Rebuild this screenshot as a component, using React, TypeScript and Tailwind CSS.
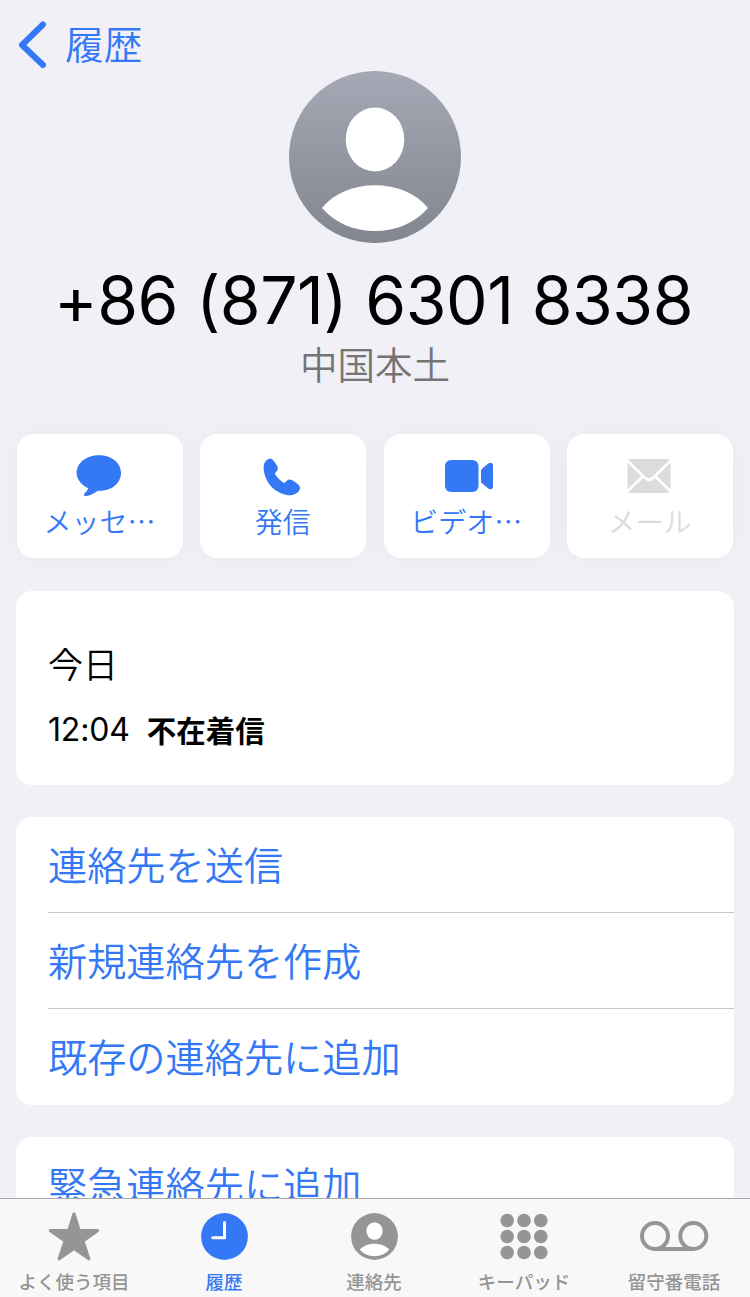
import type { ReactNode } from 'react';

const MessageIcon = () => (
  <svg className="mr-0.5" width="46" height="44" viewBox="0 0 46 44" fill="currentColor">
    <path d="M23 1.200C35.400 1.200 45 8.700 45 19S35.400 36.800 23.400 36.800c-1.200 0-2 .1-3.400 1.200-3 2.100-7.200 4-10.300 4-1.600 0-2.300-1.300-1.200-2.500 1.600-1.700 3-3.300 3.700-5.300C5.500 31 .6 25.600 .6 19 .6 8.700 10.500 1.200 23 1.200Z" />
  </svg>
);

const PhoneIcon = () => (
  <svg className="mt-px mr-0.5" width="38" height="38" viewBox="0 0 38 38" fill="currentColor">
    <path d="M9.900 30.300C16 35.400 22.600 37.600 27.900 37.300c3.200-.2 5.600-1.500 7.600-3.700 2.200-2.600 2.100-5.300-.5-7.400-1.800-1.500-4-2.900-6.200-4.100-1.900-1-3.500-.8-5 .7l-1.400 1.400c-.7.600-1.400.7-2.200.2-3.200-2.100-6-4.900-7.900-7.900-.5-.8-.4-1.400.2-2.100l1.300-1.500c1.300-1.400 1.500-2.900.5-4.700-1.200-2.200-2.600-4.300-4.100-6C8.200.1 5.400.3 3.200 2.600 1.500 4.500.6 6.600.6 9.300c0 7.400 3.500 15.500 9.300 21Z" />
  </svg>
);

const VideoIcon = () => (
  <svg className="ml-1" width="50" height="34" viewBox="0 0 50 34" fill="currentColor">
    <rect x="1" y="1" width="33.500" height="32" rx="6" />
    <path d="M37 12.600c0-1.600.5-2.400 1.600-3.300l5.700-4.700c2.200-1.700 4.700-.7 4.700 1.700v21.400c0 2.400-2.500 3.400-4.700 1.700l-5.700-4.700c-1.100-.9-1.600-1.700-1.600-3.300Z" />
  </svg>
);

const MailIcon = () => (
  <svg className="mr-0.5" width="44" height="34" viewBox="0 0 44 34">
    <rect x=".5" y="0" width="43" height="34" rx="3" fill="currentColor" />
    <path d="M-.500 1 17.500 18.500q4.500 4.500 9 0L44.500 1M-.500 33 16.200 17.200M44.500 33 27.800 17.200" fill="none" stroke="white" strokeWidth="2.600" />
  </svg>
);

const StarIcon = () => (
  <svg width="52" height="50" viewBox="0 0 52 50" fill="currentColor">
    <path d="M26 2 31.200 18.600H49.500L34.900 29 40.800 46.800 26 36.400 11.200 46.800 17.100 29 2.500 18.600H20.800Z" stroke="currentColor" strokeWidth="3.200" strokeLinejoin="round" />
  </svg>
);

const ClockIcon = () => (
  <svg width="47" height="47" viewBox="0 0 47 47">
    <circle cx="23.500" cy="23.500" r="23.400" fill="currentColor" />
    <path d="M23.500 9.500V24.700H11.800" fill="none" stroke="white" strokeWidth="3" strokeLinecap="round" strokeLinejoin="round" />
  </svg>
);

const PersonIcon = () => (
  <svg width="47" height="47" viewBox="0 0 47 47">
    <circle cx="23.500" cy="23.500" r="23.400" fill="currentColor" />
    <ellipse cx="23.500" cy="18" rx="8.100" ry="8.800" fill="white" />
    <path d="M8.800 36.600C12.300 32.800 17.600 30.700 23.500 30.700s11.200 2.100 14.700 5.900C34.600 41 29.400 43.200 23.500 43.200S12.400 41 8.800 36.600Z" fill="white" />
  </svg>
);

const KeypadIcon = () => (
  <svg width="48" height="47" viewBox="0 0 48 47" fill="currentColor">
    {[7.200, 24, 40.800].map((x) =>
      [7.500, 23.500, 39.500].map((y) => <circle key={`${x}-${y}`} cx={x} cy={y} r="6.800" />),
    )}
  </svg>
);

const VoicemailIcon = () => (
  <svg className="mb-px" width="70" height="32" viewBox="0 0 70 32" fill="none" stroke="currentColor" strokeWidth="4">
    <circle cx="16" cy="16" r="13" />
    <circle cx="54.300" cy="16" r="13" />
    <path d="M16 29H54.300" />
  </svg>
);

function Action({ icon, label, disabled }: { icon: ReactNode; label: string; disabled?: boolean }) {
  return (
    <button
      disabled={disabled}
      className={`flex h-[124px] flex-col items-center rounded-[17px] bg-white shadow-[0_0_28px_rgba(0,0,0,0.035)] ${
        disabled ? 'text-[#dcdcdc]' : 'text-[#3478f6]'
      }`}
    >
      <span className="mt-5 flex h-11 items-center justify-center">{icon}</span>
      <span className="mt-[3px] pr-px text-[28px] leading-10 font-[350] whitespace-nowrap">{label}</span>
    </button>
  );
}

function Row({ children }: { children: ReactNode }) {
  return <div className="h-24 text-[39.200px] leading-[92px] font-[350] whitespace-nowrap text-[#3478f6]">{children}</div>;
}

function Tab({ icon, label, active }: { icon: ReactNode; label: string; active?: boolean }) {
  return (
    <button className={`flex flex-col items-center pr-0.5 ${active ? 'text-[#3478f6]' : 'text-[#959595]'}`}>
      <span className="mt-3 flex h-[51px] items-center justify-center">{icon}</span>
      <span className="mt-[7px] text-[18.500px] leading-6 font-medium whitespace-nowrap">{label}</span>
    </button>
  );
}

export default function App() {
  return (
    <div className="flex h-[1297px] w-[750px] flex-col overflow-hidden bg-[#f1f0f6] font-['Noto_Sans_CJK_JP',sans-serif] text-black">
      <div className="flex min-h-0 flex-1 flex-col overflow-hidden">
        <header className="flex h-[71px] shrink-0 items-start pl-[18px] text-[#3478f6]">
          <svg className="mt-5 shrink-0" width="30" height="50" viewBox="0 0 30 50" fill="none" stroke="currentColor" strokeWidth="6" strokeLinecap="round" strokeLinejoin="round">
            <path d="M25 4.500 4 25 25 45" />
          </svg>
          <span className="ml-[17px] text-[38.700px] leading-[84px] font-[350]">履歴</span>
        </header>

        <section className="flex shrink-0 flex-col items-center">
          <div className="flex size-[172px] items-center justify-center rounded-full bg-linear-to-b from-[#a5a9b5] to-[#82868f]">
            <svg width="172" height="172" viewBox="0 0 172 172" fill="white">
              <ellipse cx="86" cy="68.500" rx="29.300" ry="32" />
              <path d="M33 137C45 122 65 114.300 86 114.300S127 122 139 137C126 152 107 160 86 160S46 152 33 137Z" />
            </svg>
          </div>
          <h1 className="mt-[17px] pr-[3px] font-['Inter',sans-serif] text-[66px] leading-20 font-normal tracking-[-0.45px] whitespace-nowrap">
            +86 (871) 6301 8338
          </h1>
          <p className="text-[37.500px] leading-[46px] font-[350] text-[#747474]">中国本土</p>
        </section>

        <div className="mt-12 grid shrink-0 grid-cols-4 gap-x-[17.33px] px-[17px]">
          <Action icon={<MessageIcon />} label="メッセ…" />
          <Action icon={<PhoneIcon />} label="発信" />
          <Action icon={<VideoIcon />} label="ビデオ…" />
          <Action icon={<MailIcon />} label="メール" disabled />
        </div>

        <section className="mx-4 mt-[33px] h-[194px] shrink-0 rounded-2xl bg-white px-8 pt-[46px]">
          <h2 className="text-[35px] leading-[52px] font-[350]">今日</h2>
          <div className="mt-[19px] flex h-11 items-center gap-[17px] leading-11">
            <span className="font-['Inter',sans-serif] text-[32px] font-normal tracking-[-0.2px]">12:04</span>
            <span className="-mt-[3px] text-[29.500px] font-bold">不在着信</span>
          </div>
        </section>

        <section className="mx-4 mt-8 shrink-0 divide-y divide-[#c6c6c8] rounded-2xl bg-white pl-8">
          <Row>連絡先を送信</Row>
          <Row>新規連絡先を作成</Row>
          <Row>既存の連絡先に追加</Row>
        </section>

        <section className="mx-4 mt-8 shrink-0 rounded-2xl bg-white pl-8">
          <Row>緊急連絡先に追加</Row>
        </section>
      </div>

      <nav className="grid h-[99px] shrink-0 grid-cols-5 border-t border-[#a9a9ad] bg-[#f8f8f8]">
        <Tab icon={<StarIcon />} label="よく使う項目" />
        <Tab icon={<ClockIcon />} label="履歴" active />
        <Tab icon={<PersonIcon />} label="連絡先" />
        <Tab icon={<KeypadIcon />} label="キーパッド" />
        <Tab icon={<VoicemailIcon />} label="留守番電話" />
      </nav>
    </div>
  );
}
